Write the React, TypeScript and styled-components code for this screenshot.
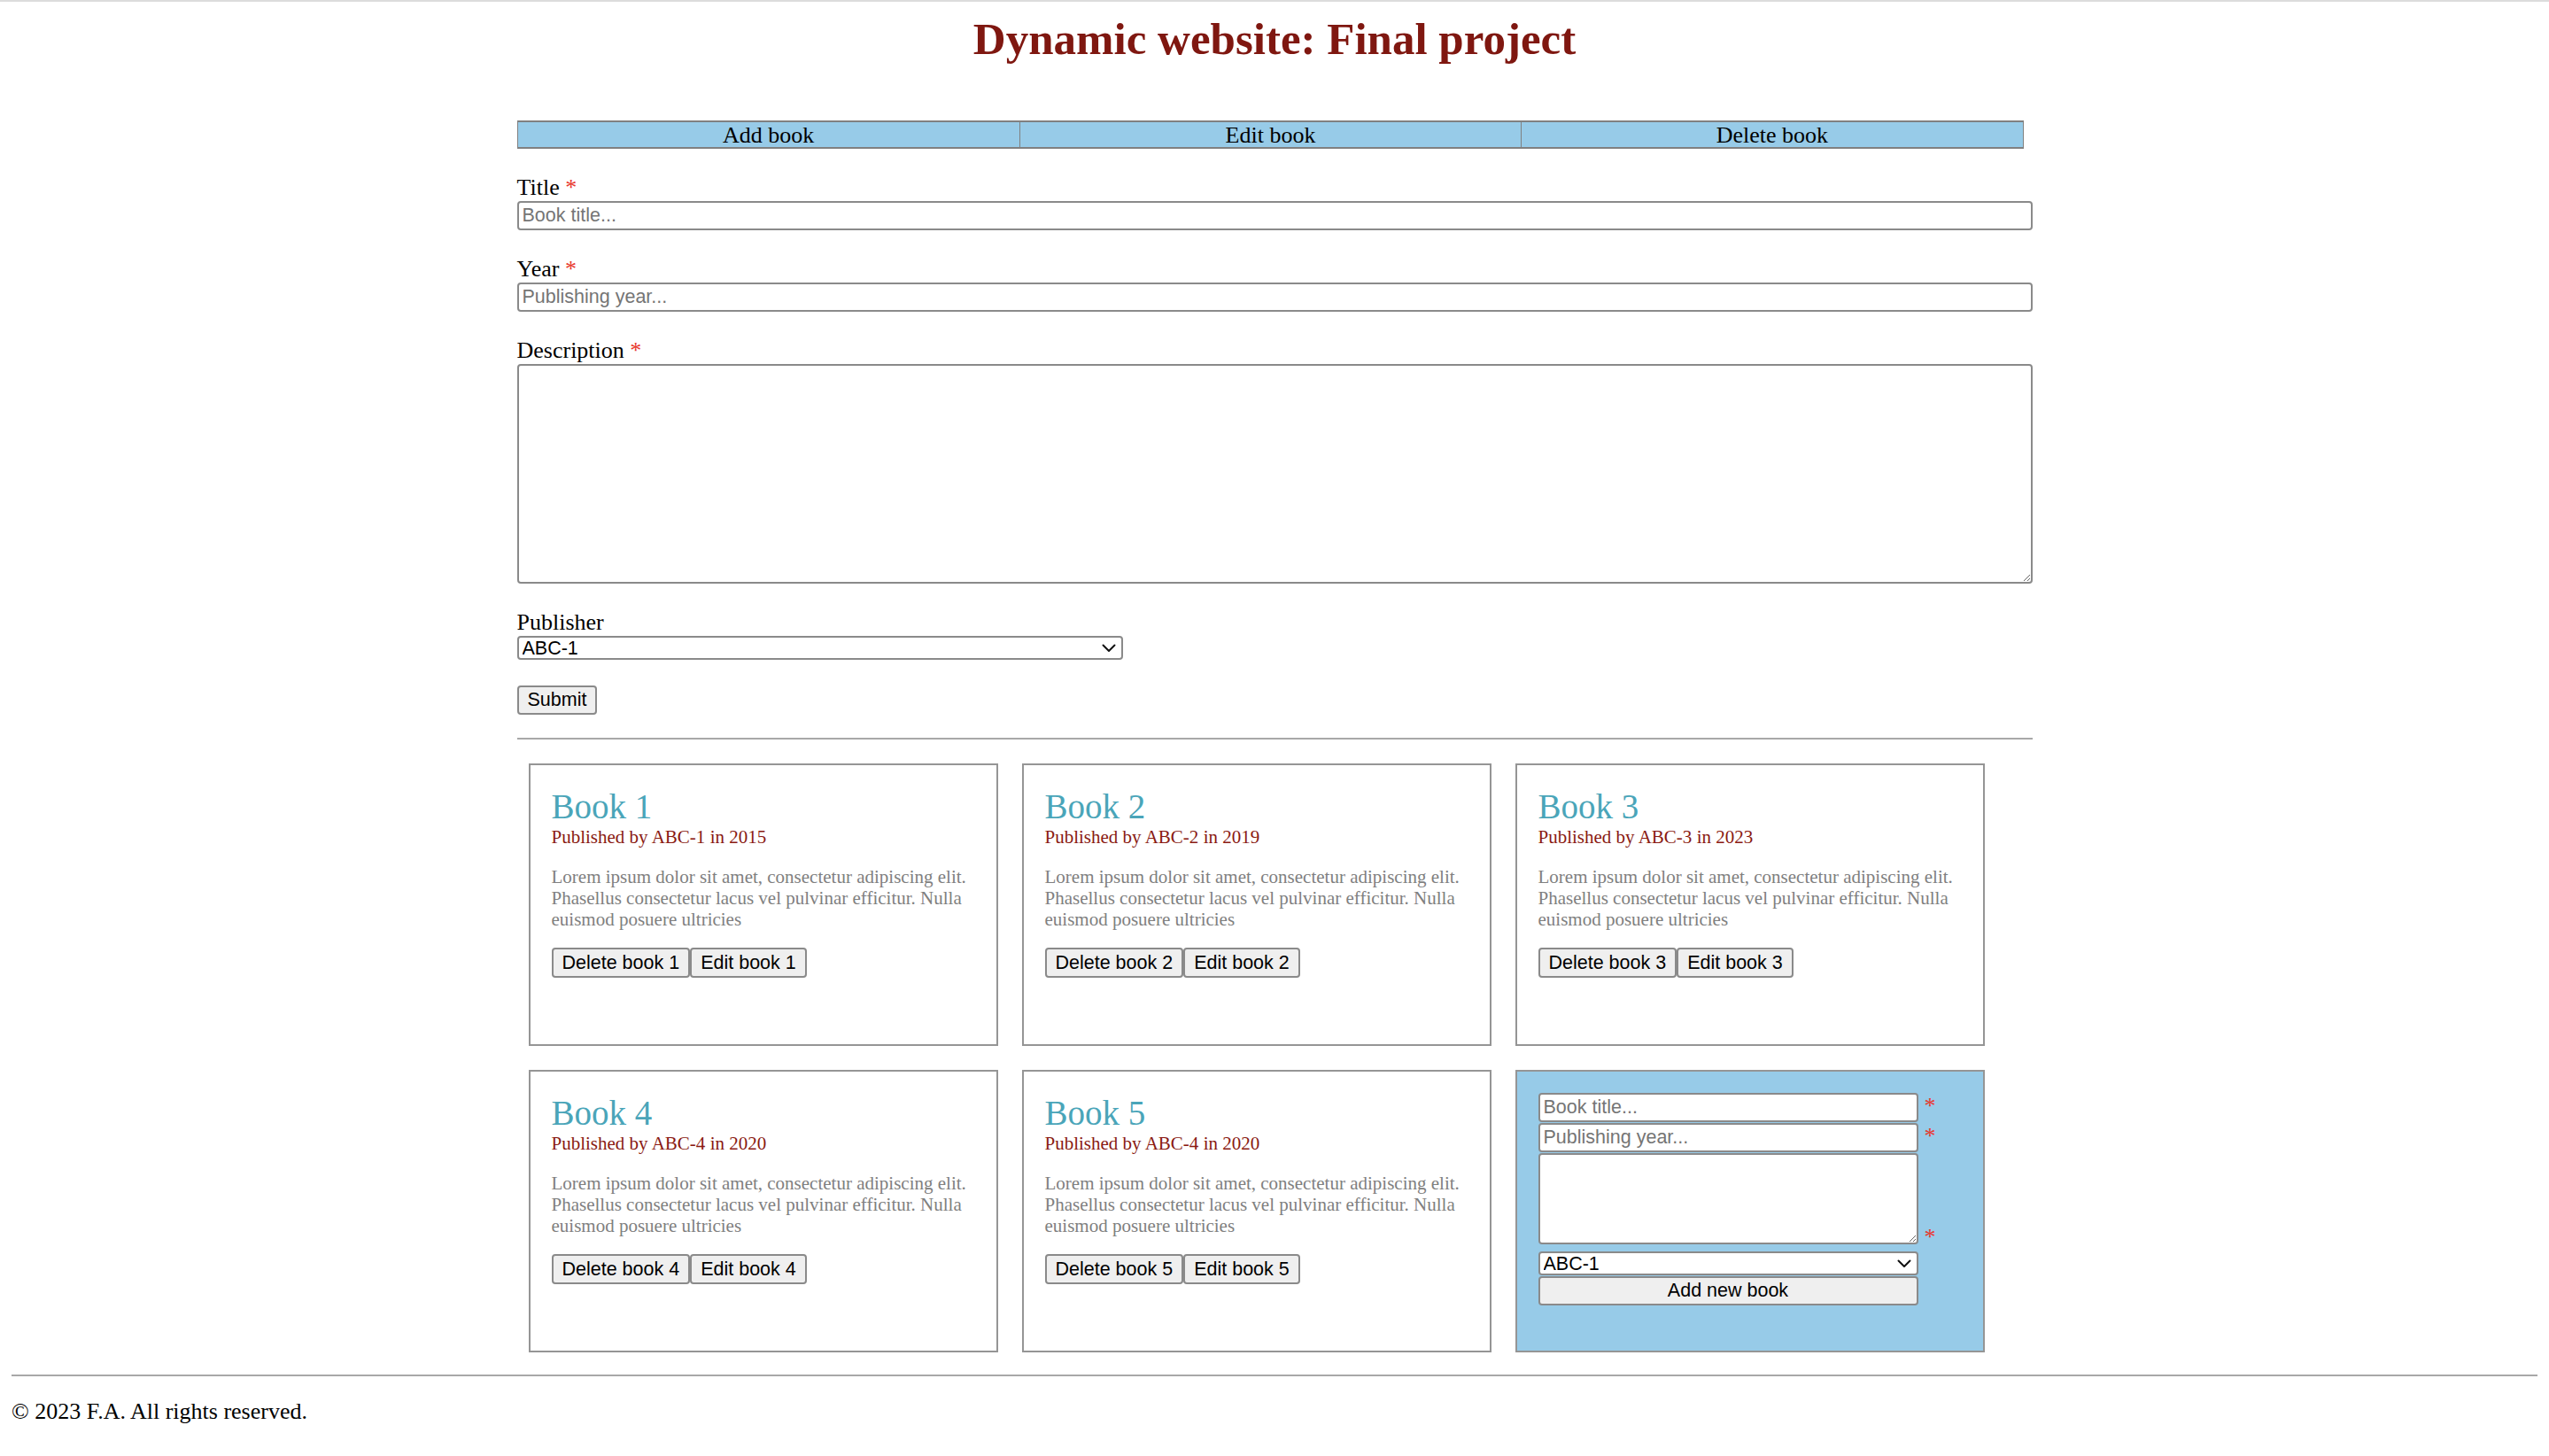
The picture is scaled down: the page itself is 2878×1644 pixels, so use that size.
import React from "react";
import styled, { createGlobalStyle, css } from "styled-components";

const GlobalStyle = createGlobalStyle`
  html, body {
    margin: 0;
    padding: 0;
    background: #ffffff;
  }
  body {
    font-family: "Liberation Serif", "Times New Roman", serif;
    font-size: 26px;
    color: #000;
  }
  *, *::before, *::after {
    box-sizing: border-box;
  }
`;

const Page = styled.div`
  border-top: 2px solid #dcdcdc;
  padding: 0 13px 40px;
  min-height: 100vh;
`;

const Title = styled.h1`
  margin: 12px 0 0;
  font-size: 51px;
  line-height: 60px;
  font-weight: 700;
  text-align: center;
  color: #7f1710;
`;

const Main = styled.main`
  width: 1711px;
  margin: 62px auto 0;
`;

const Tabs = styled.nav`
  display: grid;
  grid-template-columns: repeat(3, 1fr);
  width: 1701px;
  background: #97cbe8;
  border-style: solid;
  border-color: #808080;
  border-width: 2px 1px;
`;

const Tab = styled.button`
  height: 28px;
  padding: 1px 0 0;
  border: none;
  border-left: 1px solid #808080;
  background: transparent;
  font-family: "Liberation Serif", "Times New Roman", serif;
  font-size: 26px;
  line-height: 27px;
  color: #000;
  cursor: pointer;
  &:first-child {
    border-left: none;
  }
`;

const BookForm = styled.form`
  display: flex;
  flex-direction: column;
  gap: 29px;
  margin-top: 29px;
`;

const Field = styled.div`
  display: flex;
  flex-direction: column;
  align-items: flex-start;
`;

const Label = styled.label`
  font-size: 26px;
  line-height: 30px;
`;

const Required = styled.span`
  color: #e8372c;
`;

const fieldBase = css`
  font-family: "Liberation Sans", Arial, sans-serif;
  font-size: 21.5px;
  color: #000;
  background: #fff;
  border: 2px solid #8a8a8a;
  border-radius: 4px;
  outline: none;
  &::placeholder {
    color: #757575;
  }
`;

const TextInput = styled.input<{ $width?: number }>`
  ${fieldBase}
  width: ${(p) => (p.$width ? `${p.$width}px` : "100%")};
  height: 33px;
  padding: 0 4px;
`;

const TextArea = styled.textarea<{ $width?: number; $height: number }>`
  ${fieldBase}
  display: block;
  width: ${(p) => (p.$width ? `${p.$width}px` : "100%")};
  height: ${(p) => p.$height}px;
  padding: 2px 4px;
  resize: both;
`;

const SelectFrame = styled.div<{ $width: number }>`
  display: flex;
  align-items: center;
  width: ${(p) => p.$width}px;
  height: 27px;
  padding-right: 6px;
  background: #fff;
  border: 2px solid #8a8a8a;
  border-radius: 4px;
`;

const Select = styled.select`
  flex: 1;
  height: 100%;
  min-width: 0;
  padding: 0 4px;
  appearance: none;
  border: none;
  background: transparent;
  outline: none;
  font-family: "Liberation Sans", Arial, sans-serif;
  font-size: 21.5px;
  color: #000;
`;

const ChevronIcon = styled.svg`
  flex-shrink: 0;
  display: block;
`;

const PushButton = styled.button<{ $block?: boolean; $height?: number }>`
  width: ${(p) => (p.$block ? "100%" : "auto")};
  height: ${(p) => p.$height ?? 33}px;
  padding: 0 10px;
  background: #efefef;
  border: 2px solid #8a8a8a;
  border-radius: 4px;
  font-family: "Liberation Sans", Arial, sans-serif;
  font-size: 21.5px;
  color: #000;
  white-space: nowrap;
  cursor: pointer;
`;

const Rule = styled.hr<{ $before: number }>`
  margin: ${(p) => p.$before}px 0 0;
  height: 0;
  border: none;
  border-top: 2px solid #a8a8a8;
`;

const CardGrid = styled.section`
  display: flex;
  flex-wrap: wrap;
  gap: 27px;
  padding: 0 13px;
  margin-top: 27px;
`;

const Card = styled.article<{ $accent?: boolean }>`
  width: 530px;
  height: 319px;
  padding: 24px;
  border: 2px solid #959595;
  background: ${(p) => (p.$accent ? "#97cbe8" : "#fff")};
`;

const BookTitle = styled.h2`
  margin: 0;
  font-size: 39px;
  line-height: 45px;
  font-weight: 400;
  color: #4aa5b9;
`;

const Published = styled.p`
  margin: 0;
  font-size: 21px;
  line-height: 24px;
  color: #8a1a12;
`;

const Blurb = styled.p`
  margin: 21px 0 20px;
  font-size: 21px;
  line-height: 24px;
  color: #808080;
`;

const Actions = styled.div`
  display: flex;
`;

const QuickForm = styled.form`
  display: flex;
  flex-direction: column;
  gap: 1px;
`;

const QuickRow = styled.div<{ $end?: boolean }>`
  display: flex;
  align-items: ${(p) => (p.$end ? "flex-end" : "baseline")};
  padding-bottom: ${(p) => (p.$end ? 7 : 0)}px;
`;

const QuickField = styled.div`
  width: 429px;
`;

const Asterisk = styled.span<{ $drop?: boolean }>`
  margin-left: 7px;
  margin-bottom: ${(p) => (p.$drop ? -5 : 0)}px;
  font-size: 26px;
  line-height: 26px;
  color: #e8372c;
`;

const Footer = styled.footer`
  margin-top: 25px;
`;

const Copyright = styled.p`
  margin: 25px 0 0;
  font-size: 26px;
  line-height: 30px;
`;

const Chevron: React.FC = () => (
  <ChevronIcon width="16" height="10" viewBox="0 0 16 10" aria-hidden="true">
    <polyline
      points="1.5,1.5 8,8 14.5,1.5"
      fill="none"
      stroke="#111"
      strokeWidth="2"
      strokeLinecap="round"
      strokeLinejoin="round"
    />
  </ChevronIcon>
);

const publishers = ["ABC-1", "ABC-2", "ABC-3", "ABC-4"];

const PublisherSelect: React.FC<{ width: number; id?: string }> = ({ width, id }) => (
  <SelectFrame $width={width}>
    <Select id={id} defaultValue="ABC-1">
      {publishers.map((p) => (
        <option key={p} value={p}>
          {p}
        </option>
      ))}
    </Select>
    <Chevron />
  </SelectFrame>
);

const books = [
  { id: 1, publisher: "ABC-1", year: 2015 },
  { id: 2, publisher: "ABC-2", year: 2019 },
  { id: 3, publisher: "ABC-3", year: 2023 },
  { id: 4, publisher: "ABC-4", year: 2020 },
  { id: 5, publisher: "ABC-4", year: 2020 },
];

const lorem =
  "Lorem ipsum dolor sit amet, consectetur adipiscing elit. Phasellus consectetur lacus vel pulvinar efficitur. Nulla euismod posuere ultricies";

export default function App() {
  return (
    <>
      <GlobalStyle />
      <Page>
        <Title>Dynamic website: Final project</Title>
        <Main>
          <Tabs>
            <Tab type="button">Add book</Tab>
            <Tab type="button">Edit book</Tab>
            <Tab type="button">Delete book</Tab>
          </Tabs>

          <BookForm onSubmit={(e) => e.preventDefault()}>
            <Field>
              <Label htmlFor="title">
                Title <Required>*</Required>
              </Label>
              <TextInput id="title" placeholder="Book title..." />
            </Field>
            <Field>
              <Label htmlFor="year">
                Year <Required>*</Required>
              </Label>
              <TextInput id="year" placeholder="Publishing year..." />
            </Field>
            <Field>
              <Label htmlFor="description">
                Description <Required>*</Required>
              </Label>
              <TextArea id="description" $height={248} />
            </Field>
            <Field>
              <Label htmlFor="publisher">Publisher</Label>
              <PublisherSelect id="publisher" width={684} />
            </Field>
            <Field>
              <PushButton type="submit">Submit</PushButton>
            </Field>
          </BookForm>

          <Rule $before={26} />

          <CardGrid>
            {books.map((b) => (
              <Card key={b.id}>
                <BookTitle>Book {b.id}</BookTitle>
                <Published>
                  Published by {b.publisher} in {b.year}
                </Published>
                <Blurb>{lorem}</Blurb>
                <Actions>
                  <PushButton type="button" $height={34}>
                    Delete book {b.id}
                  </PushButton>
                  <PushButton type="button" $height={34}>
                    Edit book {b.id}
                  </PushButton>
                </Actions>
              </Card>
            ))}
            <Card $accent>
              <QuickForm onSubmit={(e) => e.preventDefault()}>
                <QuickRow>
                  <QuickField>
                    <TextInput placeholder="Book title..." />
                  </QuickField>
                  <Asterisk>*</Asterisk>
                </QuickRow>
                <QuickRow>
                  <QuickField>
                    <TextInput placeholder="Publishing year..." />
                  </QuickField>
                  <Asterisk>*</Asterisk>
                </QuickRow>
                <QuickRow $end>
                  <QuickField>
                    <TextArea $height={103} />
                  </QuickField>
                  <Asterisk $drop>*</Asterisk>
                </QuickRow>
                <QuickRow>
                  <PublisherSelect width={429} />
                </QuickRow>
                <QuickRow>
                  <QuickField>
                    <PushButton type="submit" $block>
                      Add new book
                    </PushButton>
                  </QuickField>
                </QuickRow>
              </QuickForm>
            </Card>
          </CardGrid>
        </Main>

        <Footer>
          <Rule $before={0} />
          <Copyright>© 2023 F.A. All rights reserved.</Copyright>
        </Footer>
      </Page>
    </>
  );
}
